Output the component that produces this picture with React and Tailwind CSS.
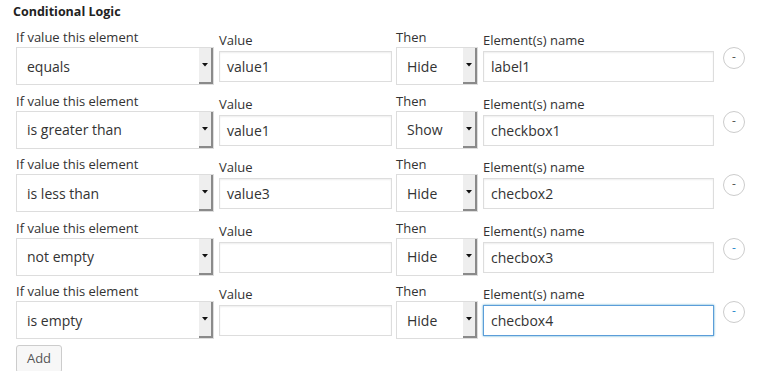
import React from "react";

const rows = [
  { cond: "equals", value: "value1", then: "Hide", name: "label1", blue: false },
  { cond: "is greater than", value: "value1", then: "Show", name: "checkbox1", blue: false },
  { cond: "is less than", value: "value3", then: "Hide", name: "checbox2", blue: false },
  { cond: "not empty", value: "", then: "Hide", name: "checbox3", blue: true },
  { cond: "is empty", value: "", then: "Hide", name: "checbox4", blue: true, focus: true },
];

function FakeSelect({ text, width }) {
  return (
    <div
      className={`${width} h-[38px] mt-[2px] border border-[#dddddd] bg-white flex items-stretch`}
    >
      <div className="flex-1 flex items-center pl-[10px] text-[14px] text-[#333333]">{text}</div>
      <div className="w-[14px] bg-[#eeeeee] border-r-2 border-b-2 border-r-[#8a8a8a] border-b-[#8a8a8a] flex items-center justify-center">
        <svg width="6" height="4" viewBox="0 0 6 4">
          <path d="M0 0 L6 0 L3 3.5 Z" fill="#111" />
        </svg>
      </div>
    </div>
  );
}

function FakeInput({ text, width, focus }) {
  return (
    <div
      className={`${width} h-[31px] mt-[3px] bg-white flex items-center pl-[7px] text-[14px] text-[#333333] border ${
        focus
          ? "border-[#5b9dd9] shadow-[0_0_2px_rgba(30,140,190,0.8)]"
          : "border-[#dddddd] shadow-[inset_0_1px_2px_rgba(0,0,0,0.07)]"
      }`}
    >
      {text}
    </div>
  );
}

export default function App() {
  return (
    <div
      className="w-[767px] h-[371px] bg-white overflow-hidden"
      style={{ fontFamily: "'Open Sans', 'Noto Sans', sans-serif" }}
    >
      <div className="pt-[4px] pl-[13px] text-[12.5px] leading-[16px] font-bold text-[#222222]">
        Conditional Logic
      </div>
      <div className="mt-[9px] pl-[16px] flex flex-col gap-[7.5px]">
        {rows.map((r, i) => (
          <div key={i} className="h-[56px] flex items-start">
            <div className="flex flex-col">
              <div className="text-[13px] leading-[16px] text-[#333333]">If value this element</div>
              <FakeSelect text={r.cond} width="w-[198px]" />
            </div>
            <div className="ml-[5px] flex flex-col pt-[3px]">
              <div className="text-[13px] leading-[16px] text-[#333333]">Value</div>
              <FakeInput text={r.value} width="w-[173px]" />
            </div>
            <div className="ml-[4px] flex flex-col">
              <div className="text-[13px] leading-[16px] text-[#333333]">Then</div>
              <FakeSelect text={r.then} width="w-[82px]" />
            </div>
            <div className="ml-[5px] flex flex-col pt-[3px]">
              <div className="text-[13px] leading-[16px] text-[#333333]">Element(s) name</div>
              <FakeInput text={r.name} width="w-[231px]" focus={r.focus} />
            </div>
            <div
              className={`ml-[9px] mt-[18px] w-[22px] h-[22px] rounded-full border border-[#cccccc] bg-white flex items-center justify-center text-[12px] leading-none ${
                r.blue ? "text-[#2e8ccc]" : "text-[#555555]"
              }`}
            >
              <span className="-mt-[2px]">-</span>
            </div>
          </div>
        ))}
      </div>
      <div className="pl-[16px] mt-[6px]">
        <button className="w-[46px] h-[28px] border border-[#cccccc] rounded-[3px] bg-[#f7f7f7] text-[13px] text-[#555555] flex items-center justify-center">
          Add
        </button>
      </div>
    </div>
  );
}
